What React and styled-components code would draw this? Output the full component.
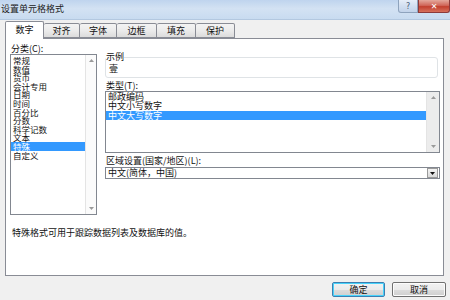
import React from "react";
import styled, { createGlobalStyle } from "styled-components";

const Global = createGlobalStyle`
  html, body { margin: 0; padding: 0; background: #f0f0f0; }
  * { box-sizing: border-box; }
`;

const FONT = `"Noto Sans CJK SC", "Noto Sans", sans-serif`;

const Window = styled.div`
  width: 450px;
  height: 300px;
  overflow: hidden;
  background: #f0f0f0;
  font-family: ${FONT};
  font-size: 9px;
  color: #111;
  display: flex;
  flex-direction: column;
`;

const TitleBar = styled.div`
  height: 20px;
  flex: none;
  display: flex;
  align-items: flex-start;
  background: linear-gradient(180deg, #bfd4ee 0%, #d3e2f3 45%, #c8dbf0 100%);
  border-bottom: 1px solid #b3c8e0;
`;

const Title = styled.div`
  padding-left: 1px;
  line-height: 18px;
  font-size: 9px;
  color: #1a1a1a;
`;

const Captions = styled.div`
  margin-left: auto;
  display: flex;
`;

const CapBtn = styled.div`
  height: 13px;
  width: ${(p) => p.$w}px;
  display: flex;
  align-items: center;
  justify-content: center;
  font-family: "DejaVu Sans", sans-serif;
  font-size: 8px;
  border: 1px solid ${(p) => (p.$close ? "#8c3a3a" : "#8ea3bd")};
  border-top: none;
  border-radius: ${(p) => (p.$close ? "0 0 3px 0" : "0 0 0 3px")};
  background: ${(p) =>
    p.$close
      ? "linear-gradient(180deg, #e4a89c 0%, #d0675a 45%, #c2402f 55%, #d6705c 100%)"
      : "linear-gradient(180deg, #e6eef8 0%, #d2dff0 50%, #c2d3ea 100%)"};
  color: ${(p) => (p.$close ? "#fff" : "#4a5c78")};
  font-weight: ${(p) => (p.$close ? 700 : 400)};
`;

const Body = styled.div`
  flex: 1;
  display: flex;
  flex-direction: column;
  padding: 0 6px 0 5px;
`;

const Tabs = styled.div`
  height: 18px;
  display: flex;
  align-items: flex-end;
  position: relative;
  z-index: 1;
`;

const Tab = styled.div`
  width: ${(p) => p.$w}px;
  height: ${(p) => (p.$active ? 18 : 15)}px;
  margin-bottom: ${(p) => (p.$active ? -1 : 0)}px;
  display: flex;
  align-items: center;
  justify-content: center;
  font-size: 9px;
  border: 1px solid #898c95;
  border-left-width: ${(p) => (p.$first || p.$active ? 1 : 0)}px;
  border-bottom: ${(p) => (p.$active ? "none" : "1px solid #898c95")};
  border-radius: 2px 2px 0 0;
  background: ${(p) =>
    p.$active ? "#fff" : "linear-gradient(180deg, #f3f3f3 0%, #ebebeb 50%, #dcdcdc 100%)"};
  padding-bottom: ${(p) => (p.$active ? 2 : 0)}px;
`;

const Panel = styled.div`
  height: 238px;
  background: #fff;
  border: 1px solid #898c95;
  display: flex;
  flex-direction: column;
  padding: 0 3px 0 4px;
`;

const Columns = styled.div`
  display: grid;
  grid-template-columns: 87px 335px;
  column-gap: 8px;
`;

const Col = styled.div`
  display: flex;
  flex-direction: column;
`;

const Label = styled.div`
  font-size: 9px;
  line-height: 10px;
  height: ${(p) => p.$h || 10}px;
  padding-top: ${(p) => p.$pt || 0}px;
  padding-left: 1px;
`;

const ListBox = styled.div`
  height: ${(p) => p.$h}px;
  border: 1px solid #828790;
  display: flex;
  background: #fff;
`;

const Items = styled.div`
  flex: 1;
  padding-top: ${(p) => p.$pt || 0}px;
`;

const Item = styled.div`
  height: ${(p) => p.$lh}px;
  line-height: ${(p) => p.$lh}px;
  font-size: ${(p) => p.$fs}px;
  padding-left: 2px;
  white-space: nowrap;
  background: ${(p) => (p.$sel ? "#3399ff" : "transparent")};
  color: ${(p) => (p.$sel ? "#fff" : "#111")};
`;

const ScrollBar = styled.div`
  width: ${(p) => p.$w || 11}px;
  flex: none;
  display: flex;
  flex-direction: column;
  justify-content: space-between;
  align-items: center;
  background: ${(p) => p.$bg || "#f4f4f4"};
  border-left: 1px solid #e4e4e4;
  padding: 4px 0;
`;

const Arrow = ({ down }) => (
  <svg width="5" height="3" viewBox="0 0 5 3">
    <path d={down ? "M0 0 L5 0 L2.5 3 Z" : "M0 3 L5 3 L2.5 0 Z"} fill="#9a9a9a" />
  </svg>
);

const Group = styled.fieldset`
  margin: 13px 0 0 0;
  height: 26px;
  padding: 0 0 0 2px;
  border: 1px solid #dfe3e6;
  border-radius: 3px;
  width: 333px;
`;

const Legend = styled.legend`
  padding: 0;
  margin-left: -2px;
  font-size: 9px;
  line-height: 10px;
  background: #fff;
`;

const Sample = styled.div`
  font-size: 9px;
  line-height: 12px;
  padding-left: 1px;
  margin-top: 1px;
`;

const Select = styled.div`
  height: 12px;
  border: 1px solid #828790;
  display: flex;
  align-items: center;
  font-size: 9px;
  padding-left: 2px;
`;

const SelectText = styled.div`
  flex: 1;
  line-height: 10px;
`;

const DropBtn = styled.div`
  width: 11px;
  height: 10px;
  margin-right: 1px;
  border: 1px solid #9a9a9a;
  background: linear-gradient(180deg, #f4f4f4, #d9d9d9);
  display: flex;
  align-items: center;
  justify-content: center;
`;

const Desc = styled.div`
  margin-top: 13px;
  padding-left: 2px;
  font-size: 9px;
  line-height: 10px;
`;

const Footer = styled.div`
  display: flex;
  justify-content: flex-end;
  gap: 7px;
  padding: 6px 0 0 0;
  margin-right: -2px;
`;

const Button = styled.div`
  width: ${(p) => p.$w}px;
  height: 15px;
  display: flex;
  align-items: center;
  justify-content: center;
  font-size: 9px;
  border: 1px solid ${(p) => (p.$def ? "#3c7fb1" : "#707070")};
  border-radius: 2px;
  background: linear-gradient(180deg, #f2f2f2 0%, #ebebeb 50%, #dddddd 51%, #cfcfcf 100%);
  box-shadow: ${(p) => (p.$def ? "inset 0 0 0 1px #48d3fb" : "inset 0 0 0 1px #fcfcfc")};
`;

const categories = [
  "常规", "数值", "货币", "会计专用", "日期", "时间", "百分比", "分数",
  "科学记数", "文本", "特殊", "自定义",
];
const types = ["邮政编码", "中文小写数字", "中文大写数字"];
const tabs = [
  ["数字", 39], ["对齐", 36], ["字体", 37], ["边框", 40], ["填充", 39], ["保护", 39],
];

export default function App() {
  return (
    <>
      <Global />
      <Window>
        <TitleBar>
          <Title>设置单元格格式</Title>
          <Captions>
            <CapBtn $w={20}>?</CapBtn>
            <CapBtn $w={32} $close>✕</CapBtn>
          </Captions>
        </TitleBar>
        <Body>
          <Tabs>
            {tabs.map(([t, w], i) => (
              <Tab key={t} $w={w} $active={i === 0} $first={i === 0}>
                {t}
              </Tab>
            ))}
          </Tabs>
          <Panel>
            <Columns>
              <Col>
                <Label $h={15} $pt={5}>分类(C):</Label>
                <ListBox $h={161}>
                  <Items $pt={1}>
                    {categories.map((c) => (
                      <Item key={c} $lh={8.6} $fs={8.5} $sel={c === "特殊"}>
                        {c}
                      </Item>
                    ))}
                  </Items>
                  <ScrollBar $bg="#fbfbfb">
                    <Arrow />
                    <Arrow down />
                  </ScrollBar>
                </ListBox>
              </Col>
              <Col>
                <Group>
                  <Legend>示例</Legend>
                  <Sample>壹</Sample>
                </Group>
                <Label $h={13} $pt={3}>类型(T):</Label>
                <ListBox $h={62}>
                  <Items $pt={0}>
                    {types.map((c) => (
                      <Item key={c} $lh={9.3} $fs={9} $sel={c === "中文大写数字"}>
                        {c}
                      </Item>
                    ))}
                  </Items>
                  <ScrollBar $w={13} $bg="#ececec">
                    <Arrow />
                    <Arrow down />
                  </ScrollBar>
                </ListBox>
                <Label $h={14} $pt={3}>区域设置(国家/地区)(L):</Label>
                <Select>
                  <SelectText>中文(简体，中国)</SelectText>
                  <DropBtn>
                    <svg width="5" height="3" viewBox="0 0 5 3">
                      <path d="M0 0 L5 0 L2.5 3 Z" fill="#111" />
                    </svg>
                  </DropBtn>
                </Select>
              </Col>
            </Columns>
            <Desc>特殊格式可用于跟踪数据列表及数据库的值。</Desc>
          </Panel>
          <Footer>
            <Button $w={53} $def>确定</Button>
            <Button $w={54}>取消</Button>
          </Footer>
        </Body>
      </Window>
    </>
  );
}
